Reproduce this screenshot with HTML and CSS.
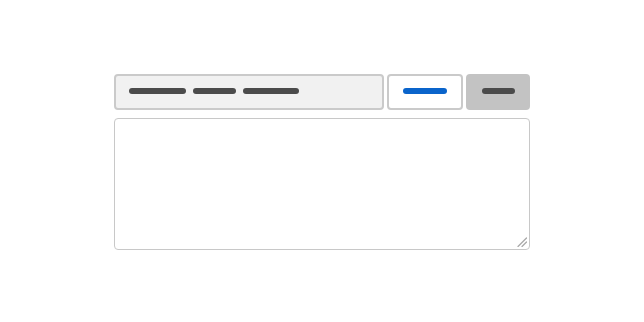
FILE: index.html
```html
<!DOCTYPE html>
<html lang="en">
<head>
<meta charset="utf-8">
<title>Form</title>
<link rel="stylesheet" href="styles.css">
</head>
<body>
<main class="wrap">
  <div class="row">
    <div class="field">
      <span class="bar dark w57"></span>
      <span class="bar dark w43"></span>
      <span class="bar dark w56"></span>
    </div>
    <button class="btn btn-outline" type="button"><span class="bar blue w44"></span></button>
    <button class="btn btn-gray" type="button"><span class="bar dark w33"></span></button>
  </div>
  <div class="area-wrap">
    <textarea class="area" aria-label="text"></textarea>
    <svg class="grip" width="10" height="10" viewBox="0 0 10 10" aria-hidden="true">
      <line x1="1" y1="9.5" x2="9.5" y2="1" stroke="#a8a8a8" stroke-width="1.2" stroke-linecap="round"/>
      <line x1="5" y1="9.5" x2="9.5" y2="5" stroke="#a8a8a8" stroke-width="1.2" stroke-linecap="round"/>
    </svg>
  </div>
</main>
</body>
</html>
```
FILE: styles.css
```css
html, body {
  margin: 0;
  padding: 0;
  background: #ffffff;
  font-family: "Liberation Sans", Arial, sans-serif;
}
.wrap {
  width: 416px;
  margin: 74px auto 0;
  display: flex;
  flex-direction: column;
  gap: 8px;
}
.row {
  display: flex;
  gap: 3px;
  height: 36px;
}
.field {
  box-sizing: border-box;
  width: 270px;
  height: 36px;
  background: #f1f1f1;
  border: 2px solid #cacaca;
  border-radius: 4px;
  display: flex;
  align-items: center;
  gap: 7px;
  padding: 0 0 2px 13px;
}
.btn {
  box-sizing: border-box;
  height: 36px;
  margin: 0;
  padding: 0 0 2px 0;
  border-radius: 4px;
  display: flex;
  align-items: center;
  justify-content: center;
  cursor: pointer;
}
.btn-outline {
  width: 76px;
  background: #ffffff;
  border: 2px solid #cacaca;
}
.btn-gray {
  width: 64px;
  background: #c3c3c3;
  border: none;
}
.bar {
  display: block;
  height: 6px;
  border-radius: 3px;
}
.dark { background: #4b4b4b; }
.blue { background: #0a64cb; }
.w57 { width: 57px; }
.w43 { width: 43px; }
.w56 { width: 56px; }
.w44 { width: 44px; }
.w33 { width: 33px; }
.area-wrap {
  position: relative;
  width: 416px;
  height: 132px;
}
.area {
  box-sizing: border-box;
  display: block;
  width: 416px;
  height: 132px;
  margin: 0;
  border: 1px solid #c8c8c8;
  border-radius: 4px;
  background: #ffffff;
  resize: none;
  outline: none;
}
.grip {
  position: absolute;
  right: 3px;
  bottom: 3px;
  pointer-events: none;
}
```
